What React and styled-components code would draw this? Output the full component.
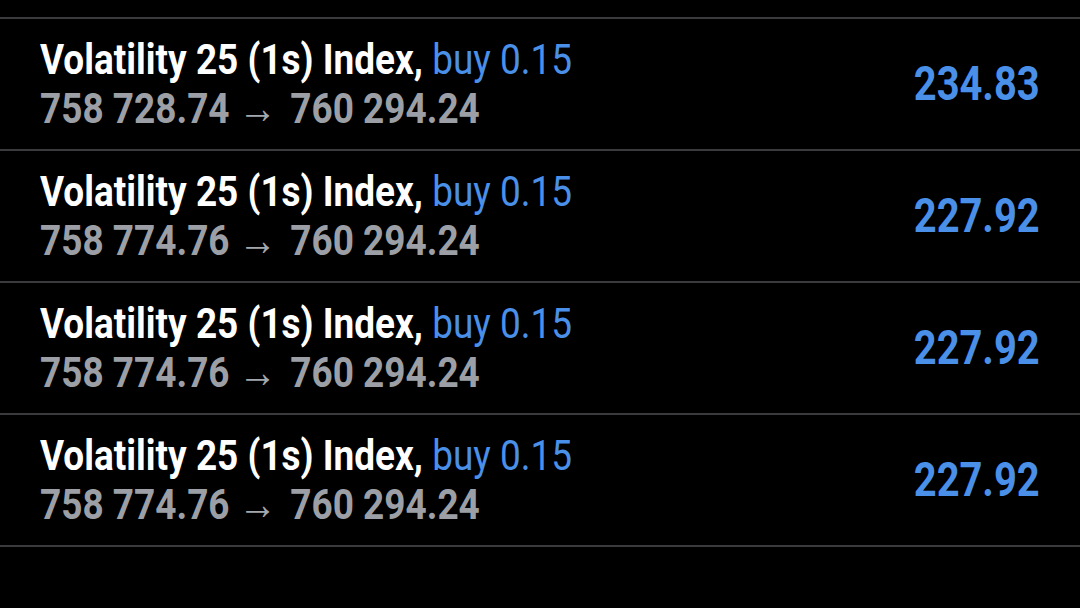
import React from "react";
import styled, { createGlobalStyle } from "styled-components";

const positions = [
  { symbol: "Volatility 25 (1s) Index,", side: "buy 0.15", open: "758 728.74", current: "760 294.24", profit: "234.83" },
  { symbol: "Volatility 25 (1s) Index,", side: "buy 0.15", open: "758 774.76", current: "760 294.24", profit: "227.92" },
  { symbol: "Volatility 25 (1s) Index,", side: "buy 0.15", open: "758 774.76", current: "760 294.24", profit: "227.92" },
  { symbol: "Volatility 25 (1s) Index,", side: "buy 0.15", open: "758 774.76", current: "760 294.24", profit: "227.92" },
];

export default function App() {
  return (
    <>
      <GlobalStyle />
      <Screen>
        <List>
          {positions.map((p, i) => (
            <Row key={i}>
              <Info>
                <Title>
                  <Symbol>{p.symbol}</Symbol> <Side>{p.side}</Side>
                </Title>
                <Prices>
                  {p.open}
                  <Arrow>→</Arrow>
                  {p.current}
                </Prices>
              </Info>
              <Profit>{p.profit}</Profit>
            </Row>
          ))}
        </List>
      </Screen>
    </>
  );
}

const GlobalStyle = createGlobalStyle`
  html, body {
    margin: 0;
    padding: 0;
    background: #000;
  }
  body {
    font-family: Roboto, "Liberation Sans", sans-serif;
  }
`;

const Screen = styled.div`
  width: 1080px;
  height: 608px;
  background: #000;
  padding-top: 17px;
  box-sizing: border-box;
  overflow: hidden;
`;

const List = styled.div`
  border-top: 2px solid #3b3b3d;
`;

const Row = styled.div`
  display: flex;
  align-items: center;
  justify-content: space-between;
  height: 130px;
  padding: 0 40px;
  border-bottom: 2px solid #3b3b3d;
`;

const Info = styled.div`
  display: flex;
  flex-direction: column;
  transform: scaleX(0.88);
  transform-origin: left center;
  white-space: nowrap;
`;

const Title = styled.div`
  font-size: 42px;
  line-height: 49px;
`;

const Symbol = styled.span`
  color: #ffffff;
  font-weight: 700;
`;

const Side = styled.span`
  color: #4a90e8;
  font-weight: 400;
`;

const Prices = styled.div`
  font-size: 42px;
  line-height: 49px;
  font-weight: 700;
  color: #9ca0a6;
`;

const Arrow = styled.span`
  font-weight: 400;
  font-size: 44px;
  margin: 0 15px 0 10px;
  color: #a4a8ae;
`;

const Profit = styled.div`
  font-size: 48px;
  line-height: 56px;
  font-weight: 700;
  color: #4a90e8;
  transform: scaleX(0.83);
  transform-origin: right center;
`;
